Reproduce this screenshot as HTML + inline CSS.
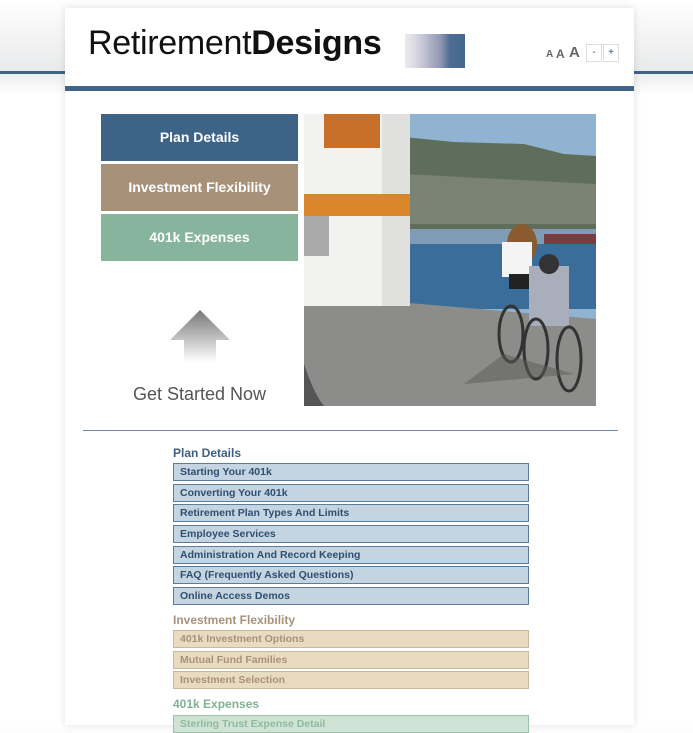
<!DOCTYPE html>
<html><head><meta charset="utf-8"><style>
*{margin:0;padding:0;box-sizing:border-box}
body{width:693px;height:725px;overflow:hidden;background:linear-gradient(#fff 0,#e9eaeb 70px,#fff 95px,#fff);font-family:"Liberation Sans",sans-serif;position:relative}
.line{position:absolute;left:0;width:693px;top:71px;height:3px;background:#3f6486}
.page{position:absolute;left:65px;top:8px;width:569px;height:717px;background:#fff;box-shadow:0 0 8px rgba(0,0,0,.12)}
.logo{position:absolute;left:88px;top:24px;font-family:"Liberation Sans",sans-serif;font-size:34px;color:#111;letter-spacing:-0.3px}
.logo b{font-weight:bold}
.sw{position:absolute;left:405px;top:34px;width:60px;height:34px;background:linear-gradient(90deg,#eceaf0 0,#dcdbe4 15%,#c6c6d4 30%,#a9adc2 45%,#8e96b0 60%,#4d6c92 75%,#456890 100%)}
.bar{position:absolute;left:65px;top:86px;width:569px;height:5px;background:#3f6486}
.fs{position:absolute;top:44px;font-family:"Liberation Sans",sans-serif;color:#666;font-weight:bold}
.btnsm{position:absolute;top:44px;width:16px;height:18px;border:1px solid #ddd;color:#3050a0;font-size:10px;text-align:center;line-height:16px}
.nb{position:absolute;left:101px;width:197px;height:47px;color:#fff;font-weight:bold;font-size:14px;text-align:center;line-height:47px}
.gs{position:absolute;left:101px;width:197px;top:384px;text-align:center;font-size:18px;color:#555;font-family:"Liberation Sans",sans-serif}
.hr{position:absolute;left:83px;top:430px;width:535px;height:1px;background:#6d8aa8}
.h{position:absolute;left:173px;font-size:12px;font-weight:bold}
.it{position:absolute;left:173px;width:356px;height:18px;font-size:10.5px;font-weight:bold;padding-left:6px;line-height:16px;border:1px solid}
.p{background:#c4d4e0;border-color:#5c7c9c;color:#2f4f70}
.i{background:#e9dbc0;border-color:#c9b89a;color:#a8917a}
.e{background:#cfe3d5;border-color:#9cc3aa;color:#8dbb9f}
</style></head><body>
<div class="line"></div>
<div class="page"></div>
<div class="logo">Retirement<b>Designs</b></div>
<div class="sw"></div>
<div class="bar"></div>
<div class="fs" style="left:546px;font-size:10px;top:49px">A</div>
<div class="fs" style="left:556px;font-size:12px;top:47px">A</div>
<div class="fs" style="left:569px;font-size:15px;top:44px">A</div>
<div class="btnsm" style="left:586px">-</div>
<div class="btnsm" style="left:603px">+</div>
<div class="nb" style="top:114px;background:#3d6487">Plan Details</div>
<div class="nb" style="top:164px;background:#a89179">Investment Flexibility</div>
<div class="nb" style="top:214px;background:#86b49d">401k Expenses</div>
<svg style="position:absolute;left:169px;top:310px" width="62" height="52"><defs><linearGradient id="g" x1="0" y1="0" x2="0" y2="1"><stop offset="0" stop-color="#777"/><stop offset="1" stop-color="#fff"/></linearGradient></defs><path d="M31 0 L61 30 L47 30 L47 52 L15 52 L15 30 L1 30 Z" fill="url(#g)"/></svg>
<div class="gs">Get Started Now</div>
<svg style="position:absolute;left:304px;top:114px" width="292" height="292" viewBox="0 0 292 292">
<rect width="292" height="292" fill="#8fb3d0"/>
<path d="M70 20 L150 28 L220 30 L260 40 L292 42 L292 125 L70 125Z" fill="#5e6e5a"/>
<path d="M100 60 L292 70 L292 110 L100 110Z" fill="#8d8f80" opacity=".6"/>
<rect x="100" y="115" width="192" height="18" fill="#7e9cb6"/>
<rect x="240" y="120" width="52" height="15" fill="#7a3a40"/>
<rect x="0" y="130" width="292" height="65" fill="#3b6d9a"/>
<path d="M0 180 L292 205 L292 292 L0 292Z" fill="#8c8c8a"/>
<path d="M0 250 Q10 280 20 292 L0 292Z" fill="#555"/>
<rect x="0" y="0" width="106" height="192" fill="#f2f2f0"/>
<rect x="78" y="0" width="28" height="192" fill="#e0e0de"/>
<rect x="20" y="0" width="56" height="34" fill="#c8702a"/>
<rect x="0" y="80" width="106" height="22" fill="#d8872a"/>
<rect x="0" y="102" width="25" height="40" fill="#aaa"/>
<ellipse cx="218" cy="130" rx="15" ry="20" fill="#8a5a30"/>
<rect x="198" y="128" width="30" height="35" fill="#f4f4f4"/>
<rect x="205" y="160" width="22" height="15" fill="#222"/>
<rect x="225" y="152" width="40" height="60" fill="#a9aebc"/>
<circle cx="245" cy="150" r="10" fill="#333"/>
<g fill="none" stroke="#333" stroke-width="3"><ellipse cx="207" cy="220" rx="12" ry="28"/><ellipse cx="232" cy="235" rx="12" ry="30"/><ellipse cx="265" cy="245" rx="12" ry="32"/></g>
<path d="M200 240 L270 260 L160 270Z" fill="#5a5a58" opacity=".5"/>
</svg>
<div class="hr"></div>
<div class="h" style="top:446px;color:#3f5f80">Plan Details</div>
<div class="it p" style="top:463px">Starting Your 401k</div>
<div class="it p" style="top:484px">Converting Your 401k</div>
<div class="it p" style="top:504px">Retirement Plan Types And Limits</div>
<div class="it p" style="top:525px">Employee Services</div>
<div class="it p" style="top:546px">Administration And Record Keeping</div>
<div class="it p" style="top:566px">FAQ (Frequently Asked Questions)</div>
<div class="it p" style="top:587px">Online Access Demos</div>
<div class="h" style="top:613px;color:#a8917a">Investment Flexibility</div>
<div class="it i" style="top:630px">401k Investment Options</div>
<div class="it i" style="top:651px">Mutual Fund Families</div>
<div class="it i" style="top:671px">Investment Selection</div>
<div class="h" style="top:697px;color:#7fb392">401k Expenses</div>
<div class="it e" style="top:715px">Sterling Trust Expense Detail</div>
</body></html>
